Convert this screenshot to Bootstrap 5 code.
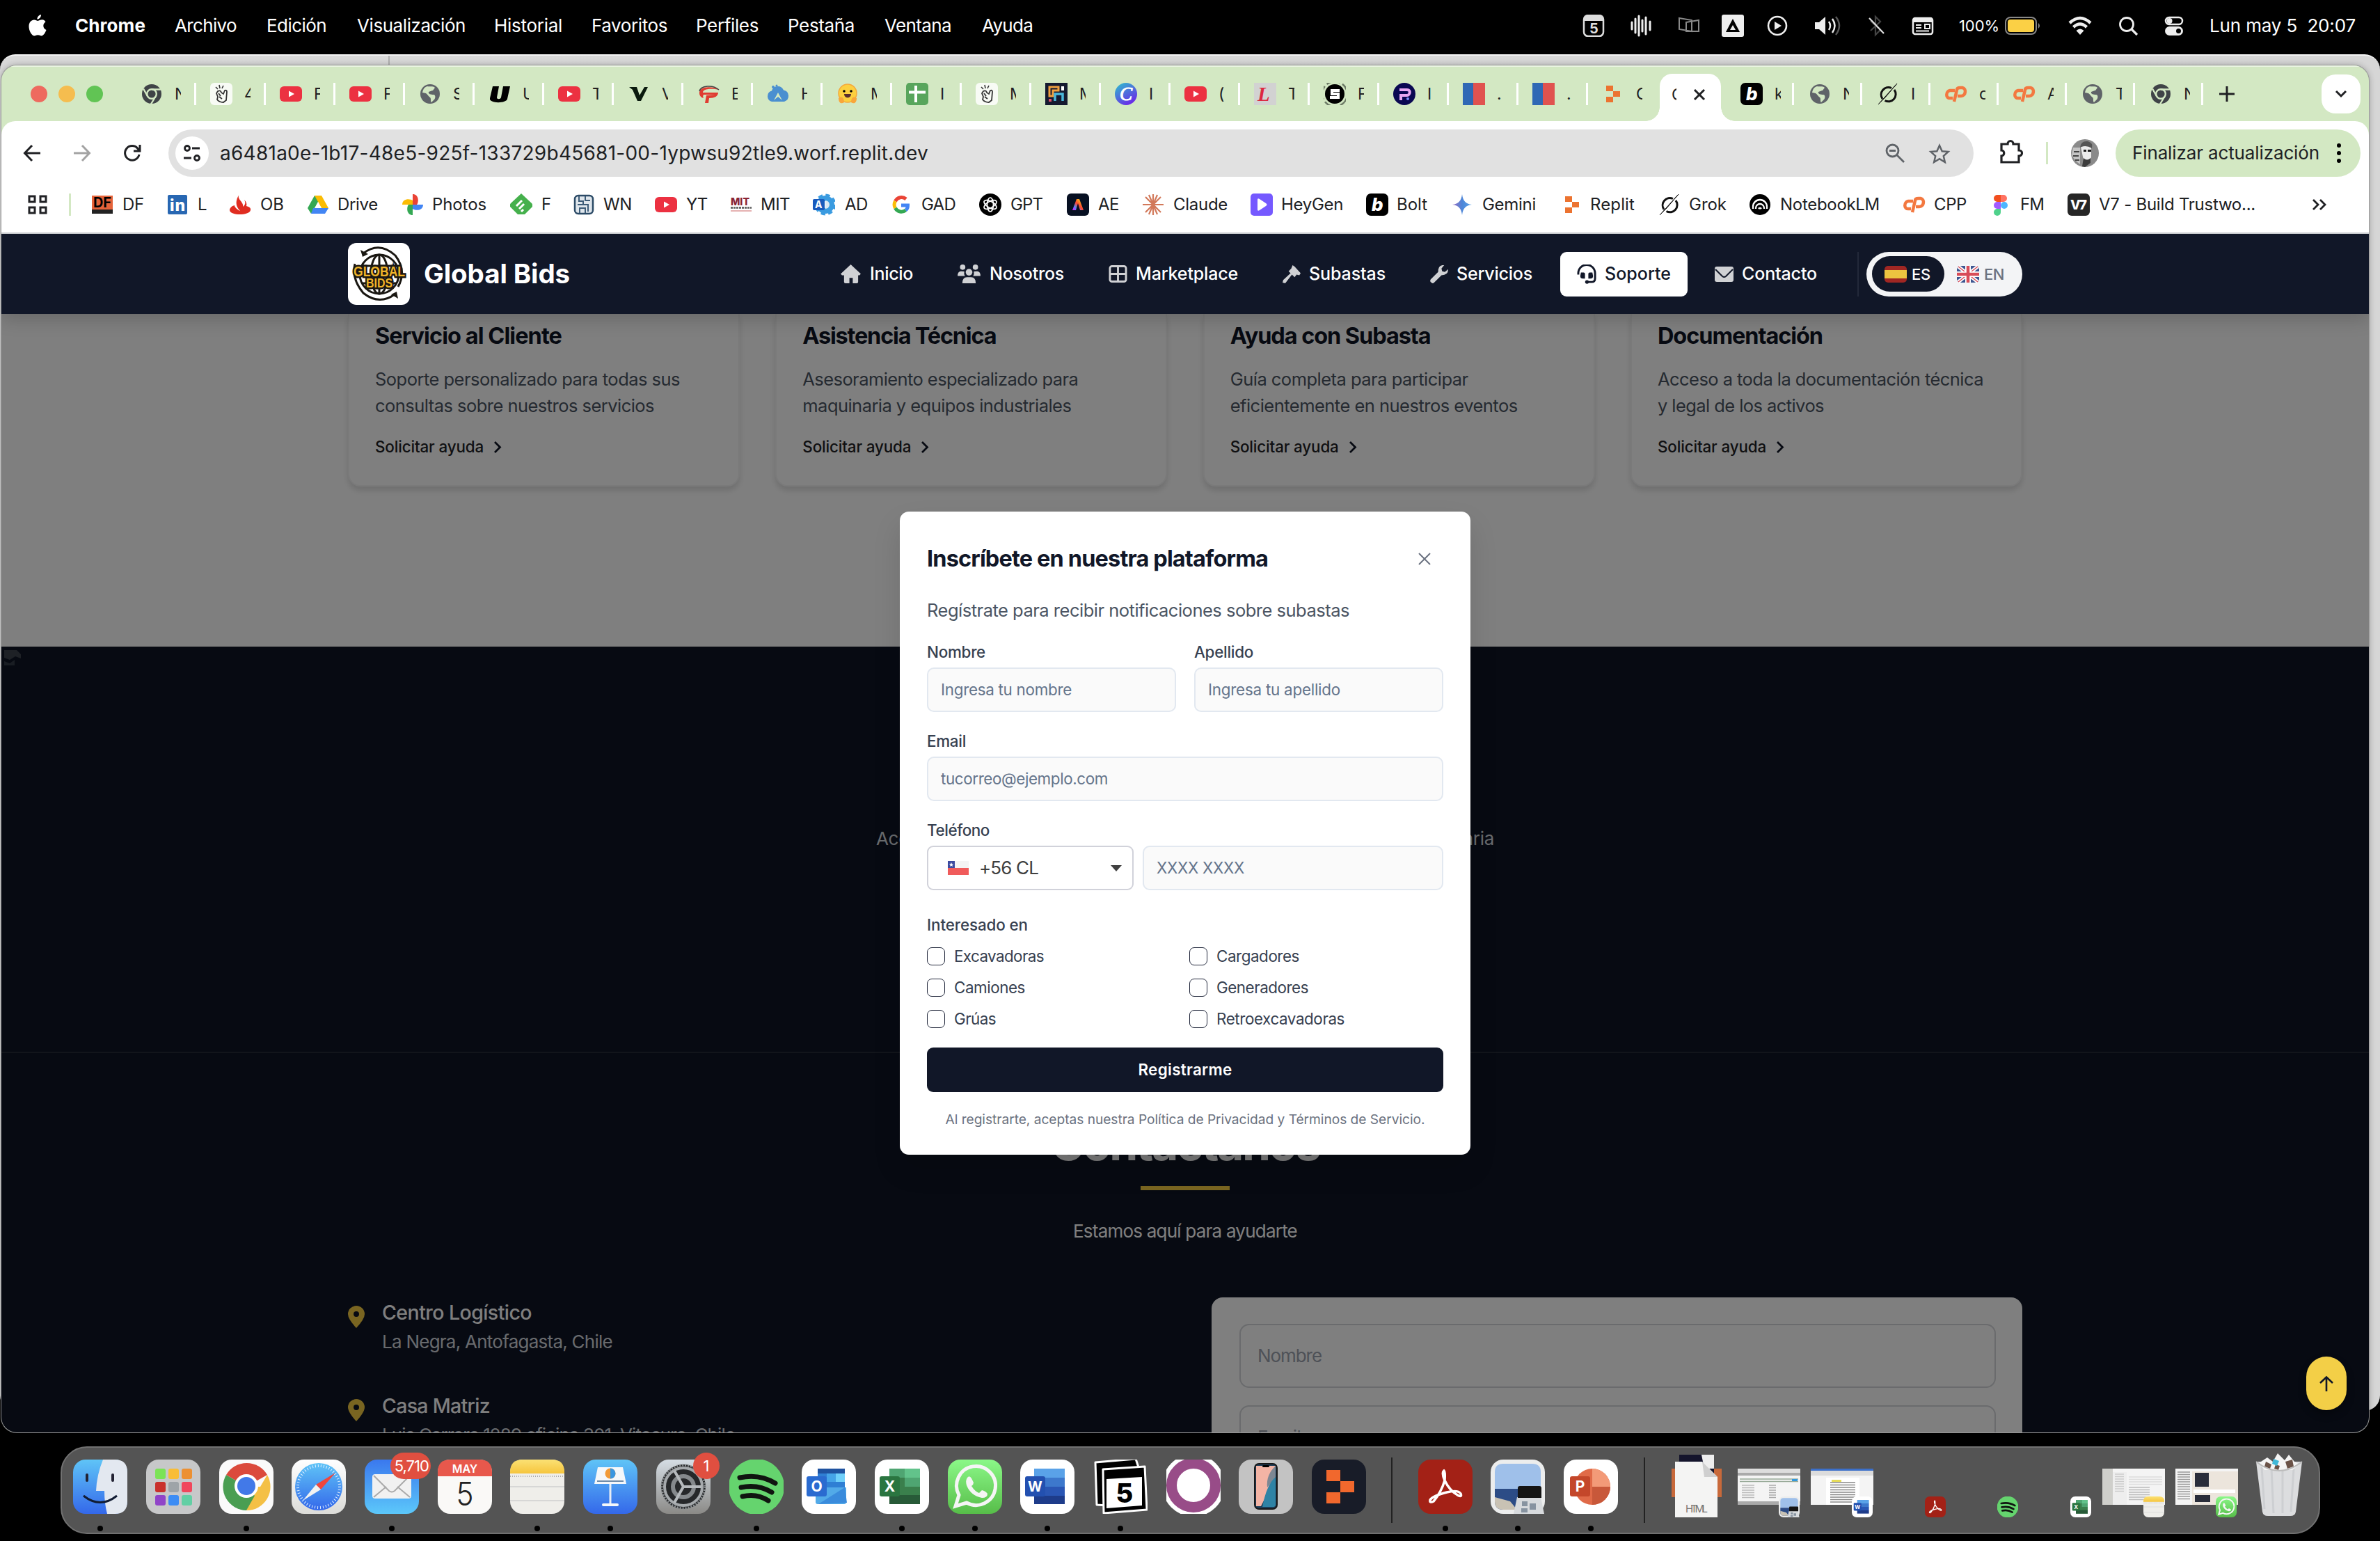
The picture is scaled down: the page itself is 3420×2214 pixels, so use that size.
<!DOCTYPE html>
<html lang="es">
<head>
<meta charset="utf-8">
<title>Global Bids</title>
<link href="https://cdn.jsdelivr.net/npm/bootstrap@5.3.0/dist/css/bootstrap.min.css" rel="stylesheet">
<style>
html,body{height:2214px;width:3420px;overflow:hidden;background:#000}
body{font-family:Inter,"Liberation Sans",sans-serif;font-size:24px;line-height:1;color:#202124;position:relative}
svg{display:block;flex:none;overflow:visible}
[data-w]{display:inline-block;white-space:pre;flex:none}
.slot{display:flex;align-items:center;flex:none}
/* macOS menu bar */
.menubar{height:78px;padding-bottom:4px;color:#fff;font-size:26px}
/* windows */
.backwin{position:absolute;left:0;top:78px;width:3420px;height:1949px;border-radius:22px;background:linear-gradient(90deg,#d9d9d9,#d6d6d6);border-top:2px solid #f4f4f4}
.backwin i{display:block;width:2px;height:16px;background:#b0b0b0;margin-left:558px}
.win{position:absolute;left:2px;top:94px;width:3402px;height:1964px;border-radius:22px;overflow:hidden;background:#d3e8c3;box-shadow:0 0 0 1px #999,0 0 10px rgba(0,0,0,.3)}
.tabs{height:80px;border-top:2px solid #eaf5e2}
.lights{gap:16px;padding-left:42px;width:200px}
.lights i{width:24px;height:24px;border-radius:50%}
.tabitem{display:flex;align-items:center;height:32px;border-right:3px solid #fff;flex:none}
.tabitem span{width:9px;overflow:hidden;font-size:23px;margin-left:17px;line-height:30px;white-space:nowrap}
.tab-on{width:88px;height:68px;margin-top:10px;padding-bottom:9px;background:#fff;border-radius:18px 18px 0 0;padding-left:17px;position:relative;flex:none}
.tab-on:before,.tab-on:after{content:"";position:absolute;bottom:0;width:20px;height:20px}
.tab-on:before{left:-20px;background:radial-gradient(circle at 0 0,transparent 19.5px,#fff 20px)}
.tab-on:after{right:-20px;background:radial-gradient(circle at 100% 0,transparent 19.5px,#fff 20px)}
.tab-on span{width:7px;overflow:hidden;font-size:23px;line-height:30px}
.tabmenu{width:56px;height:56px;border-radius:20px;background:#fff;margin-right:12px}
.toolbar{height:92px;background:#fff;border-radius:20px 20px 0 0}
.omnibox{width:2594px;height:68px;border-radius:34px;background:#e1e1e1;margin-left:40px;padding:0 34px 0 10px;font-size:28px}
.sitebtn{width:48px;height:48px;border-radius:50%;background:#fff;margin-right:16px}
.update{width:352px;height:68px;border-radius:34px;background:#d3e8c3;font-size:26px;padding-left:24px}
.bookmarks{height:68px;background:#fff;padding-bottom:12px}
.bookmarks span{font-size:24px}
.vsep{width:3px;height:32px;background:#d3e8c3}
/* site */
.site{height:1724px;position:relative;background:#fff;overflow:hidden;border-top:2px solid #c9cccf}
.sitebar{position:absolute;left:0;right:0;top:0;height:115px;background:#111728;z-index:5;padding:0 498px;color:#fff;box-shadow:0 8px 24px rgba(0,0,0,.18)}
.logo{width:89px;height:89px;border-radius:12px;background:#fff}
.brandname{font-size:38.5px;font-weight:700;margin-left:20px}
.navitem{height:64px;padding:0 24px;border-radius:9px;font-size:25px;font-weight:500;margin-left:16px;color:#fff;white-space:nowrap}
.navitem.on{background:#fff;color:#111728;margin-right:-1px}
.navitem svg{color:#d0d1d4}
.navitem.on svg{color:#111728}
.langs{width:224px;height:64px;border-radius:32px;background:#f3f4f6;padding:0 8px;color:#6b7280;font-size:22px;font-weight:500}
.langs .es{width:104px;height:51px;border-radius:26px;background:#111728;color:#fff;padding-left:18px}
.shell{width:2406px;margin:0 auto}
.helpgrid{margin-top:115px;display:grid;grid-template-columns:repeat(4,563px);justify-content:space-between;height:248px}
.helpcard{border:2px solid #f4f4f5;border-top:0;border-radius:0 0 18px 18px;padding:12px 0 0 37px;box-shadow:0 6px 9px rgba(0,0,0,.13);background:#fff}
.helpcard h3{font-size:32.5px;font-weight:700;line-height:40px;margin:0 0 23px;color:#0f1424}
.helpcard p{font-size:25.5px;line-height:38px;margin:0 0 24px;color:#4b5563}
.helpcard p [data-w]{display:block}
.helpcard a{display:flex;align-items:center;font-size:22.4px;font-weight:500;line-height:32px;color:#0f1424;text-decoration:none}
.cta{margin-top:230px;height:584px;background:#0f1525;border-bottom:2px solid #252a37;color:#d1d5db;font-size:26px;display:flex;flex-direction:column;align-items:center;padding-top:263px;position:relative}
.cta>svg{position:absolute;left:1px;top:3px}
.contact{background:#0f1525;height:600px;text-align:center;padding-top:95px}
.contact h2{font-size:66px;font-weight:700;line-height:70px;margin:0;color:#f0f0f0}
.goldbar{width:128px;height:6px;background:#f2ca42;margin:26px auto 39px}
.contact .sub{font-size:26px;line-height:40px;color:#fff;margin:0 0 75px}
.place{height:134px;padding-top:2px}
.place h4{font-size:28.5px;font-weight:500;line-height:40px;margin:0 0 2px;color:#fff}
.place p{font-size:26px;line-height:40px;margin:0;color:#d1d5db}
.place svg{margin:10px 25px 0 0}
.msgform{width:1165px;border-radius:16px;background:#fff;height:400px;padding:38px 38px 0 40px}
.msgfield{height:92px;border:2px solid #d4d6da;border-radius:14px;margin-bottom:25px;padding-left:24px;color:#9ca3af;font-size:26px;display:flex;align-items:center}
.dim{position:absolute;inset:0;background:rgba(0,0,0,.5);z-index:3}
.totop{position:absolute;z-index:6;left:3312px;top:1613px;width:58px;height:77px;border-radius:29px;background:#f3cf47;box-shadow:0 6px 12px rgba(0,0,0,.3)}
/* dialog */
.signup{position:absolute;z-index:6;left:1291px;top:399px;width:820px;height:924px;border-radius:13px;background:#fff;padding:0 39px;box-shadow:0 20px 40px rgba(0,0,0,.12);color:#374151;font-size:22.4px}
.signup h1{font-size:32.5px;font-weight:700;margin:0;color:#111728;line-height:40px}
.signup .intro{font-size:25.5px;color:#4b5563;line-height:36px;margin:36px 0 0}
.fl{line-height:32px;height:32px;font-weight:500;display:block}
.fbox{height:64px;border:2px solid #e2e8f0;border-radius:10px;background:#fafafa;color:#64748b;padding-left:18px;display:flex;align-items:center}
.fbox.pick{width:297px;background:#fff;border-color:#d1d2da;color:#404040;font-size:26px;padding-left:28px;border-radius:9px}
.tick{width:26px;height:26px;border:1.600px solid #20263a;border-radius:7px;margin-right:13px;flex:none}
.ticks{display:grid;grid-template-columns:377px 1fr;row-gap:19px;margin-top:16px}
.ticks div{display:flex;align-items:center;height:26px}
.go{height:64px;border-radius:9px;background:#111728;color:#fff;font-weight:600;margin-top:28px;font-size:22.4px}
.legal{font-size:19.2px;line-height:30px;height:30px;color:#6b7280;margin:24px 0 0;text-align:center}
/* dock */
.dock{position:absolute;left:87px;top:2078px;width:3247px;height:126px;border-radius:38px;background:#545454;border:2px solid #717171;padding-left:3px}
.app{width:104.7px;height:122px;padding-top:17px;display:flex;flex-direction:column;align-items:center;position:relative;flex:none}
.app.run:after{content:"";width:8px;height:8px;border-radius:50%;background:#000;position:absolute;top:112px}
.note{position:absolute;top:7px;left:57px;min-width:38px;height:38px;border-radius:19px;background:#e04f40;color:#fff;font-size:22px;text-align:center;line-height:38px;padding:0 6px;letter-spacing:-1px}
.note.wide{left:50px;width:58px}
.dsep{width:2px;height:94px;background:#222;flex:none}
.shot{width:90px;height:52px;margin-top:13px;background:#f4f4f4;position:relative}
.mini{position:absolute;left:66px;top:70px}
</style>
<script src="https://cdn.jsdelivr.net/npm/bootstrap@5.3.0/dist/js/bootstrap.bundle.min.js"></script>
</head>
<body>
<svg width="0" height="0" class="position-absolute">
<defs>
<linearGradient id="gb" x1="0" y1="0" x2="0" y2="1"><stop offset="0" stop-color="#5fc4f7"/><stop offset="1" stop-color="#3468ea"/></linearGradient>
<linearGradient id="gbr" x1="0" y1="0" x2="0" y2="1"><stop offset="0" stop-color="#3a78ee"/><stop offset="1" stop-color="#5cc8fa"/></linearGradient>
<linearGradient id="gg" x1="0" y1="0" x2="0" y2="1"><stop offset="0" stop-color="#8bf888"/><stop offset="1" stop-color="#57bd49"/></linearGradient>
<linearGradient id="gy" x1="0" y1="0" x2="0" y2="1"><stop offset="0" stop-color="#fbe174"/><stop offset="1" stop-color="#f6c53d"/></linearGradient>
<linearGradient id="gw" x1="0" y1="0" x2="0" y2="1"><stop offset="0" stop-color="#fff"/><stop offset="1" stop-color="#dcdcd8"/></linearGradient>
<linearGradient id="gset" x1="0" y1="0" x2="0" y2="1"><stop offset="0" stop-color="#d5dde4"/><stop offset="1" stop-color="#8b8a87"/></linearGradient>
<linearGradient id="gcanva" x1="0" y1="0" x2=".6" y2="1"><stop offset="0" stop-color="#2bc4cc"/><stop offset="1" stop-color="#6a2be8"/></linearGradient>
<linearGradient id="ggem" x1="0" y1="0" x2="1" y2="0"><stop offset="0" stop-color="#9a6cc0"/><stop offset=".5" stop-color="#4d86d8"/><stop offset="1" stop-color="#5aa3e8"/></linearGradient>
<linearGradient id="gae" x1="0" y1="1" x2="1" y2="0"><stop offset="0" stop-color="#f0f"/><stop offset=".25" stop-color="#58f"/><stop offset=".5" stop-color="#f43"/><stop offset=".75" stop-color="#f9a31f"/><stop offset="1" stop-color="#7d3"/></linearGradient>
<symbol id="apple" viewBox="0 0 28 34"><path fill="#fff" d="M19 1c.3 3-2.200 6.500-5.500 6.700C13 4.800 16 1.500 19 1zM25.500 11.500c-4.700 2.800-4 9.500 1 11.500-1 3-3.800 8.500-7 8.500-2 0-2.700-1.200-5-1.200s-3.200 1.200-5 1.200C5.500 31.500 1.500 24 1.500 18c0-6 3.700-9.500 7.500-9.500 2.400 0 4 1.400 5.500 1.400 1.400 0 3.500-1.600 6.300-1.600 1.700 0 3.500 1.200 4.700 3.200z"/></symbol>
<symbol id="chrm" viewBox="0 0 32 32"><circle cx="16" cy="16" r="14" fill="#3f4347"/><circle cx="16" cy="16" r="6.800" fill="none" stroke="#d3e8c3" stroke-width="2.400"/><path d="M16 9.500h13M10.200 19.300 4 8.500M21.600 19.500 15 30.500" stroke="#d3e8c3" stroke-width="2.400"/></symbol>
<symbol id="snap" viewBox="0 0 32 32"><rect width="32" height="32" rx="6" fill="#f8fbf5"/><path d="M8 6l3 3M13 3l1 5M19 4l-2 4" fill="none" stroke="#333" stroke-width="1.600"/><path d="M11 12q4-2 5 2l3 2 2-5q3-1 3 2l-1 12-4 3q-6 0-9-4l1-4-2-5zM12 15l3 4M13 20l4 3" fill="none" stroke="#333" stroke-width="1.800"/></symbol>
<symbol id="yt" viewBox="0 0 32 32"><rect y="5" width="32" height="22" rx="6" fill="#ec3141"/><path d="M13 11.500v9l8-4.500z" fill="#fff"/></symbol>
<symbol id="globe" viewBox="0 0 32 32"><circle cx="16" cy="16" r="14" fill="#5f6368"/><path d="M12 5c3 1 8-1 11 2l-3 4c-2 0-3 1-6 2-1 3 3 4 7 4 3 0 3 5 1 7l-4 4c-2-1 0-5-2-7-3-2-3-4-6-6l-5-1C6 9 8 6 12 5z" fill="#d3e8c3"/></symbol>
<symbol id="uu" viewBox="0 0 32 32"><path d="M6 5h9l-3 16c0 3 5 3 6 0l3-16h10l-4 18c-1 7-27 7-25-1z" fill="#000"/></symbol>
<symbol id="vv" viewBox="0 0 32 32"><path d="M2 6h11l4 12 7-12h5L19 26h-5L7 10z" fill="#0a1a0e"/></symbol>
<symbol id="tt" viewBox="0 0 32 32"><path d="M3 15C2 5 22 4 31 10 22 8 8 8 8 14h22c0 5-5 8-13 8l-1 7h-5l2-11 13-1H9c-1 2-1 3 0 5-4-1-6-4-6-7z" fill="#e03c31"/><path d="M3 12C5 4 22 2 31 10" fill="none" stroke="#444" stroke-width="1.500"/></symbol>
<symbol id="cloudb" viewBox="0 0 32 32"><path d="M7 27a8 8 0 0 1 0-15.500 9 9 0 0 1 17-1A8.500 8.500 0 0 1 25 27z" fill="#4a8fd0"/><path d="M10 25l6-11 6 11-6-5z" fill="#d3e8c3"/><circle cx="9" cy="6" r="2" fill="#4a8fd0"/><circle cx="14" cy="4" r="1.500" fill="#4a8fd0"/></symbol>
<symbol id="hug" viewBox="0 0 32 32"><circle cx="16" cy="15" r="13" fill="#fcd03f" stroke="#f5a83a" stroke-width="1.500"/><circle cx="11" cy="12" r="1.800"/><circle cx="21" cy="12" r="1.800"/><path d="M11 16h10c0 7-10 7-10 0z" fill="#5a2d2d"/><path d="M3 22c5-4 8 0 8 6-4 3-8 1-8-6zM29 22c-5-4-8 0-8 6 4 3 8 1 8-6z" fill="#f9a63a"/></symbol>
<symbol id="sheet" viewBox="0 0 32 32"><rect width="32" height="32" rx="5" fill="#58a55c"/><path d="M14 4v24M4 13.500h24" stroke="#fff" stroke-width="4"/></symbol>
<symbol id="maze" viewBox="0 0 32 32"><rect width="32" height="32" fill="#151a30"/><path d="M6 19V6h13v5H11v8z" fill="none" stroke="#f0a040" stroke-width="3"/><path d="M14 26V16h11v10" fill="none" stroke="#4ab8dc" stroke-width="3.500"/><path d="M23 5h4v6h-4z" fill="#fff"/><path d="M5 23h4v4H5z" fill="#e04e6a"/></symbol>
<symbol id="canva" viewBox="0 0 32 32"><circle cx="16" cy="16" r="16" fill="url(#gcanva)"/><text x="7" y="25" font-size="27" font-style="italic" font-family="Liberation Serif" fill="#fff" stroke="#fff">C</text></symbol>
<symbol id="ell" viewBox="0 0 32 32"><rect width="32" height="32" fill="#d2d2d2"/><text x="5" y="26" font-size="29" font-weight="700" font-style="italic" font-family="Liberation Serif" fill="#dc2840">L</text></symbol>
<symbol id="ess" viewBox="0 0 32 32"><circle cx="16" cy="16" r="14" fill="#000"/><circle cx="16" cy="16" r="18" fill="none" stroke="#6d7b67" stroke-width="2.500" stroke-dasharray="20 4"/><path d="M23 11H12v5h9v5H9" fill="none" stroke="#fff" stroke-width="4"/></symbol>
<symbol id="pee" viewBox="0 0 32 32"><circle cx="16" cy="16" r="16" fill="#0a0852"/><path d="M9 10h11c6 0 4 8 0 8h-9v7" fill="none" stroke="#e6a6f0" stroke-width="4"/><circle cx="21" cy="23" r="2" fill="#7a8cf5"/></symbol>
<symbol id="flagbr" viewBox="0 0 32 32"><path d="M0 0h15v32H0z" fill="#2f68b5"/><path d="M15 0h17v32H15z" fill="#e0524f"/></symbol>
<symbol id="replit" viewBox="0 0 32 32"><path d="M6 4h10v8H6zM16 12h10v8H16zM6 20h10v8H6z" fill="#ec7330"/></symbol>
<symbol id="bolt" viewBox="0 0 32 32"><rect width="32" height="32" rx="7"/><text x="8" y="25" font-size="26" font-weight="800" font-style="italic" font-family="Inter" fill="#fff">b</text></symbol>
<symbol id="grok" viewBox="0 0 32 32"><path d="M21 7.500A10.500 10.500 0 0 0 8 23M25 10a10.500 10.500 0 0 1-13.500 15.500" fill="none" stroke="#111" stroke-width="3"/><path d="M2 31 29 1 12 21z" fill="#111" stroke="#111"/></symbol>
<symbol id="cp" viewBox="0 0 32 32"><path d="M14 11H7c-6 1-7 12 1 11h3M13 27l4-17c0-2 2-3 5-3h3c6 1 5 12-2 12h-5" fill="none" stroke="#f37840" stroke-width="4.500"/></symbol>
<symbol id="df" viewBox="0 0 32 32"><path fill="#e5633a" d="M1 3h30v20H1z"/><path d="M1 23h30v6H1z" fill="#222"/><text x="3" y="20" font-size="20" font-weight="700" font-family="Inter" textLength="26" lengthAdjust="spacingAndGlyphs">DF</text></symbol>
<symbol id="inn" viewBox="0 0 32 32"><rect x="2" y="2" width="28" height="28" rx="2" fill="#2867b2"/><text x="5" y="25" font-size="23" font-weight="800" font-family="Inter" fill="#fff" textLength="22">in</text></symbol>
<symbol id="sant" viewBox="0 0 32 32"><path d="M15 1c-5 7 7 11 5 18 4-3 4-6 2-10 3 3 4 6 3 9 4 1 7 3 6 6-2 8-29 8-30 0 0-3 3-6 7-7 0 3 5 7 8 8C9 18 9 10 15 1z" fill="#e02c20"/></symbol>
<symbol id="drive" viewBox="0 0 32 32"><path d="M11 3h10l-9 17-6 9L1 21z" fill="#34a853"/><path d="M11 3h10l10 18H21z" fill="#fbbc04"/><path d="M9 21h22l-5 8H6z" fill="#4285f4"/><path d="m16 12-5 9h10z" fill="#fff"/></symbol>
<symbol id="photos" viewBox="0 0 32 32"><path d="M16 16V1c9 0 9 11 6 15z" fill="#ea4335"/><path d="M16 16h15c0 9-11 9-15 6z" fill="#4285f4"/><path d="M16 16v15c-9 0-9-11-6-15z" fill="#34a853"/><path d="M16 16H1c0-9 11-9 15-6z" fill="#fbbc04"/></symbol>
<symbol id="feed" viewBox="0 0 32 32"><path d="M16 0 31 14c2 2 2 4 0 6L21 30H11L1 20c-2-2-2-4 0-6z" fill="#45b04c"/><path d="m9 18 8-8M13 22l7-7M16 26l3-3" stroke="#fff" stroke-width="3"/></symbol>
<symbol id="wn" viewBox="0 0 32 32"><rect x="3" y="3" width="26" height="26" rx="5" fill="#dfe6ec" stroke="#2b4a66" stroke-width="2.500"/><path d="M9 4v7h6v5H7m11-12v6h7M10 28v-7h8v7m-3-12h7v10" fill="none" stroke="#3d5c78" stroke-width="2"/></symbol>
<symbol id="mit" viewBox="0 0 32 32"><text x="1" y="17" font-size="15" font-weight="800" font-family="Inter" fill="#8a2433" textLength="27" lengthAdjust="spacingAndGlyphs">MIT</text><path d="M1 20.500h30" stroke="#555" stroke-width="2.500" stroke-dasharray="3 1"/><path d="M1 25h30" stroke="#d99" stroke-width="1.500"/></symbol>
<symbol id="adp" viewBox="0 0 32 32"><circle cx="18" cy="16" r="9" fill="none" stroke="#3a9be0" stroke-width="8"/><circle cx="18" cy="16" r="13" fill="none" stroke="#3a9be0" stroke-width="5" stroke-dasharray="6 4.200"/><path d="M18 10a6 6 0 0 1 0 12z" fill="#dbe7f3"/><rect y="8" width="17" height="16" rx="2" fill="#185abd"/><text x="3" y="21" font-size="14" font-weight="700" font-family="Inter" fill="#fff">A</text></symbol>
<symbol id="goog" viewBox="0 0 32 32"><g fill="none" stroke-width="5"><path d="M23 8A10 10 0 0 0 7.500 11" stroke="#ea4335"/><path d="M7.500 11a10 10 0 0 0 0 10" stroke="#fbbc05"/><path d="M7.500 21A10 10 0 0 0 22.500 24" stroke="#34a853"/><path d="M22.500 24c3-2 3-5 3-7H16" stroke="#4285f4"/></g></symbol>
<symbol id="gpt" viewBox="0 0 32 32"><circle cx="16" cy="16" r="16"/><g fill="none" stroke="#fff" stroke-width="1.700"><ellipse cx="16" cy="16" rx="4.500" ry="10"/><ellipse cx="16" cy="16" rx="4.500" ry="10" transform="rotate(60 16 16)"/><ellipse cx="16" cy="16" rx="4.500" ry="10" transform="rotate(120 16 16)"/></g></symbol>
<symbol id="ae" viewBox="0 0 32 32"><rect width="32" height="32" rx="6" fill="#071022"/><path d="M8 24 14 8h4l6 16h-5l-3-10-3 10z" fill="url(#gae)"/></symbol>
<symbol id="claude" viewBox="0 0 32 32"><path d="M16 1v30M1 16h30M5 5l22 22M27 5 5 27M10 2l12 28M22 2 10 30" stroke="#d2795a" stroke-width="2.200"/></symbol>
<symbol id="heygen" viewBox="0 0 32 32"><rect width="32" height="32" rx="5" fill="#7559ff"/><path d="M10 9q0-3 3-1l9 6q3 2 0 4l-9 6q-3 2-3-1z" fill="#fff"/></symbol>
<symbol id="gemini" viewBox="0 0 32 32"><path d="M16 1c1 9 5 14 14 15-9 1-13 6-14 15C15 22 11 17 2 16c9-1 13-6 14-15z" fill="url(#ggem)"/></symbol>
<symbol id="nblm" viewBox="0 0 32 32"><circle cx="16" cy="16" r="15"/><g fill="none" stroke="#fff" stroke-width="2.300"><path d="M6 22v-3a10 10 0 0 1 20 0v3M10 22v-1a6 6 0 0 1 12 0v1M14 22a2.500 2.500 0 0 1 4 0"/></g></symbol>
<symbol id="figma" viewBox="0 0 32 32"><path d="M16 2h-5a5 5 0 0 0 0 10h5z" fill="#f24e1e"/><path d="M16 2h4a5 5 0 0 1 0 10h-4z" fill="#ff7262"/><path d="M16 12h-5a5 5 0 0 0 0 10h5z" fill="#a259ff"/><circle cx="21" cy="17" r="5" fill="#4db6ff"/><path d="M16 22h-5a5 5 0 1 0 5 5z" fill="#4fd18b"/></symbol>
<symbol id="v7" viewBox="0 0 32 32"><rect width="32" height="32" rx="6" fill="#262626"/><text x="4" y="23" font-size="19" font-weight="800" font-family="Inter" fill="#fff" textLength="24">V7</text></symbol>
<symbol id="grid4" viewBox="0 0 32 32"><g fill="none" stroke="#202124" stroke-width="3"><path d="M4 4h8v8H4zM20 4h8v8h-8zM4 20h8v8H4zM20 20h8v8h-8z"/></g></symbol>
<!-- status icons -->
<symbol id="s-cal" viewBox="0 0 32 32"><rect x="2" y="1" width="28" height="30" rx="6" fill="#000" stroke="#ddd" stroke-width="2.500"/><path d="M2 9V6q0-5 5-5h18q5 0 5 5v3z" fill="#ddd"/><text x="10" y="27" font-size="20" font-weight="700" font-family="Inter" fill="#ddd">5</text></symbol>
<symbol id="s-wave" viewBox="0 0 32 32"><path d="M3 11v10M8 6v20M13 2v28M18 8v16M23 4v24M29 10v12" stroke="#eee" stroke-width="3" stroke-linecap="round"/></symbol>
<symbol id="s-disp" viewBox="0 0 32 32"><path d="M2 5 20 8v16L2 21zM12 11 30 8v16H12z" fill="none" stroke="#8a8a8a" stroke-width="2"/></symbol>
<symbol id="s-tri" viewBox="0 0 32 32"><rect width="32" height="32" rx="3" fill="#eee"/><path d="M16 6 26 25H6z"/><path d="m16 15 4 7h-8z" fill="#eee"/></symbol>
<symbol id="s-play" viewBox="0 0 32 32"><circle cx="16" cy="16" r="13" fill="none" stroke="#eee" stroke-width="2.600"/><path d="M12 10v12l10-6z" fill="#eee"/></symbol>
<symbol id="s-vol" viewBox="0 0 40 32"><path d="M2 11h6l9-8v26l-9-8H2z" fill="#eee"/><path d="M22 10q4 6 0 12M27 6q7 10 0 20" fill="none" stroke="#eee" stroke-width="2.500"/><path d="M32 3q10 13 0 26" fill="none" stroke="#555" stroke-width="2.500"/></symbol>
<symbol id="s-bt" viewBox="0 0 32 32"><path d="M8 9 22 22l-7 7V3l7 7L8 23" fill="none" stroke="#444" stroke-width="2.300"/><path d="M6 5 27 27" stroke="#ddd" stroke-width="2.300"/></symbol>
<symbol id="s-kb" viewBox="0 0 32 32"><rect x="2" y="5" width="28" height="23" rx="3" fill="none" stroke="#eee" stroke-width="2.500"/><path d="M2 8h28" stroke="#eee" stroke-width="6"/><path d="M6 15h8M6 19h8M6 23.500h19" stroke="#eee" stroke-width="2"/><rect x="19" y="14" width="7" height="6" fill="none" stroke="#eee" stroke-width="2"/></symbol>
<symbol id="s-bat" viewBox="0 0 52 32"><rect x="1" y="4" width="44" height="24" rx="7" fill="none" stroke="#888" stroke-width="2"/><rect x="4" y="7" width="38" height="18" rx="4" fill="#fbd045"/><path d="M48 12v8q4-4 0-8z" fill="#888"/></symbol>
<symbol id="s-wifi" viewBox="0 0 36 32"><path d="M3 12q15-14 30 0M8.500 18q9.500-9 19 0" fill="none" stroke="#eee" stroke-width="4.500"/><path d="m12.500 23 5.500 6 5.500-6q-5.500-5-11 0z" fill="#eee"/></symbol>
<symbol id="s-find" viewBox="0 0 32 32"><circle cx="14" cy="14" r="9.500" fill="none" stroke="#eee" stroke-width="2.800"/><path d="m21 21 8 8" stroke="#eee" stroke-width="3.200"/></symbol>
<symbol id="s-cc" viewBox="0 0 32 32"><rect x="4" y="4" width="24" height="10" rx="5" fill="none" stroke="#eee" stroke-width="2.500"/><circle cx="9.500" cy="9" r="4" fill="#eee"/><rect x="3" y="17" width="26" height="13" rx="6.500" fill="#eee"/><circle cx="22.500" cy="23.500" r="3.500"/></symbol>
<!-- site icons -->
<symbol id="n-home" viewBox="0 0 30 28"><path fill="currentColor" d="M15 0 30 14l-2 2h-2v10q0 2-2 2h-6v-8h-5v8H7q-2 0-2-2V16H2l-2-2z"/></symbol>
<symbol id="n-team" viewBox="0 0 34 28"><g fill="currentColor"><circle cx="7.500" cy="4" r="4"/><circle cx="26.500" cy="4" r="4"/><path d="M0 17q0-7 5-7 5 0 5 1-1 4 1 6zM34 17q0-7-5-7-5 0-5 1 1 4-1 6z"/><circle cx="17" cy="11.500" r="5"/><path d="M7 28q0-9 7-9h6q7 0 7 9z"/></g></symbol>
<symbol id="n-grid" viewBox="0 0 27 26"><rect x="1.500" y="1.500" width="24" height="23" rx="3" fill="none" stroke="currentColor" stroke-width="3"/><path d="M13.500 2v22M2 13h23" stroke="currentColor" stroke-width="3"/></symbol>
<symbol id="n-gavel" viewBox="0 0 27 27"><path fill="currentColor" d="m15 0 3 2 9 10-2 3-4-1-3 4-4-4L4 27l-4-1 1-4L12 12 9 9l4-4z"/></symbol>
<symbol id="n-wrench" viewBox="0 0 27 27"><path fill="currentColor" d="M21 0q-9-1-9 10L1 21q-2 3 1 5 2 2 4 0L17 15q10 0 10-9l-5 4-4-1-1-4z"/></symbol>
<symbol id="n-head" viewBox="0 0 29 29"><path d="M2 15v-2a12 12 0 0 1 25 0v8q0 5-5 5h-8" fill="none" stroke="currentColor" stroke-width="3"/><path fill="currentColor" d="M6 12h4q2 0 2 2v7H9q-4 0-4-4zM23 12h-4q-2 0-2 2v7h3q4 0 4-4z"/><circle cx="15" cy="26" r="2.800" fill="currentColor"/></symbol>
<symbol id="n-mail" viewBox="0 0 27 22"><rect width="27" height="22" rx="3" fill="currentColor"/><path d="m1 4 10 10q2.500 2 5 0L26 4" fill="none" stroke="#111728" stroke-width="2"/></symbol>
<symbol id="pin" viewBox="0 0 24 32"><path d="M12 0a12 12 0 0 1 12 12q0 7-12 20Q0 19 0 12A12 12 0 0 1 12 0zm0 8a4 4 0 1 0 0 8 4 4 0 0 0 0-8z" fill="#f2ca42" fill-rule="evenodd"/></symbol>
<!-- dock icons -->
<symbol id="d-finder" viewBox="0 0 78 78"><rect width="78" height="78" rx="18" fill="url(#gb)"/><path d="M43 0q-9 22-10 45h12q0 18 4 33h11q18 0 18-18V18Q78 0 60 0z" fill="#e3e8f0"/><path d="M20 22v8M57 22v8" stroke="#223" stroke-width="4" stroke-linecap="round"/><path d="M15 52q24 19 48 0" fill="none" stroke="#111c33" stroke-width="3"/></symbol>
<symbol id="d-launch" viewBox="0 0 78 78"><rect width="78" height="78" rx="18" fill="#c7c8c9"/><g><rect x="13" y="13" width="15" height="15" rx="3" fill="#7be356"/><rect x="32" y="13" width="15" height="15" rx="3" fill="#f8bd36"/><rect x="51" y="13" width="15" height="15" rx="3" fill="#ec9032"/><rect x="13" y="32" width="15" height="15" rx="3" fill="#c9312c"/><rect x="32" y="32" width="15" height="15" rx="3" fill="#9ea4a8"/><rect x="51" y="32" width="15" height="15" rx="3" fill="#f1475c"/><rect x="13" y="51" width="15" height="15" rx="3" fill="#9044c8"/><rect x="32" y="51" width="15" height="15" rx="3" fill="#3c8cf4"/><rect x="51" y="51" width="15" height="15" rx="3" fill="#62cfa4"/></g></symbol>
<symbol id="d-chrome" viewBox="0 0 78 78"><rect width="78" height="78" rx="18" fill="#fafafa"/><path d="M39 39 10 22a34 34 0 0 1 59 0z" fill="#db4a3c"/><path d="M39 39h20l10-17a34 34 0 0 1-30 51z" fill="#f4c045"/><path d="M39 39 10 22a34 34 0 0 0 29 51l12-21z" fill="#4a9e52"/><circle cx="39" cy="38" r="17" fill="#fff"/><circle cx="39" cy="38" r="13" fill="#4279e8"/></symbol>
<symbol id="d-safari" viewBox="0 0 78 78"><rect width="78" height="78" rx="18" fill="url(#gw)"/><circle cx="39" cy="39" r="34" fill="url(#gb)"/><circle cx="39" cy="39" r="30" fill="none" stroke="#dfefff" stroke-width="4" stroke-dasharray="1 3"/><path d="m63 19-28 17 7 7z" fill="#f0463c"/><path d="m16 59 19-23 7 7z" fill="#f2f2f2"/></symbol>
<symbol id="d-mail" viewBox="0 0 78 78"><rect width="78" height="78" rx="18" fill="url(#gbr)"/><rect x="11" y="21" width="56" height="35" rx="4" fill="#f1f1f1"/><path d="m13 23 22 22q4 3 8 0l22-22M13 54l18-15M65 54 47 39" fill="none" stroke="#aaa" stroke-width="2"/></symbol>
<symbol id="d-cal" viewBox="0 0 78 78"><rect width="78" height="78" rx="18" fill="#faf9f7"/><path d="M0 24v-6Q0 0 18 0h42q18 0 18 18v6z" fill="#e8584c"/><text x="39" y="19" font-size="16" font-weight="600" font-family="Inter" fill="#fff" text-anchor="middle">MAY</text><text x="39" y="66" font-size="46" font-weight="300" font-family="Inter" fill="#222" text-anchor="middle" textLength="25" lengthAdjust="spacingAndGlyphs">5</text></symbol>
<symbol id="d-notes" viewBox="0 0 78 78"><rect width="78" height="78" rx="18" fill="#efeeea"/><path d="M0 20v-2Q0 0 18 0h42q18 0 18 18v2z" fill="url(#gy)"/><path d="M0 24h78" stroke="#aaa" stroke-width="2" stroke-dasharray="1 2"/><path d="M0 39h78M0 59h78" stroke="#cfcfcf" stroke-width="1.500"/></symbol>
<symbol id="d-key" viewBox="0 0 78 78"><rect width="78" height="78" rx="18" fill="url(#gb)"/><path d="M21 11h36l5 24H16z" fill="#f5f7fa"/><circle cx="39" cy="20" r="7.500" fill="#f29a38"/><path d="M39 20v-7.500a7.500 7.500 0 0 1 0 15z" fill="#3a96e0"/><path d="M20 31h38" stroke="#6f8ba8" stroke-width="2"/><path d="M39 35v30" stroke="#e8edf4" stroke-width="3"/><rect x="27" y="63" width="24" height="4" rx="2" fill="#f5f7fa"/></symbol>
<symbol id="d-set" viewBox="0 0 78 78"><rect width="78" height="78" rx="18" fill="url(#gset)"/><circle cx="39" cy="39" r="32" fill="#26282a"/><circle cx="39" cy="39" r="27" fill="none" stroke="#a5a9ac" stroke-width="4"/><circle cx="39" cy="39" r="31" fill="none" stroke="#8d9194" stroke-width="3" stroke-dasharray="2 2"/><circle cx="39" cy="39" r="15" fill="none" stroke="#85898c" stroke-width="6"/><path d="M39 39h26M39 39 26 16M39 39 26 62" stroke="#b5b9bc" stroke-width="4"/></symbol>
<symbol id="d-spot" viewBox="0 0 78 78"><circle cx="39" cy="39" r="40" fill="#65d46e"/><path d="M15 26q28-6 51 8M17 40q24-5 44 7M19 53q20-5 37 6" fill="none" stroke="#101510" stroke-width="7" stroke-linecap="round"/></symbol>
<symbol id="d-out" viewBox="0 0 78 78"><rect width="78" height="78" rx="18" fill="#fff"/><path d="M23 13h39v30H23z" fill="#2f7fd4"/><path d="M23 13h39v7H23z" fill="#1f52a0"/><path d="M36 20h13v12H36z" fill="#45a4e8"/><path d="M49 20h13v12H49z" fill="#70d0fa"/><path d="M20 40h44v21q0 3-3 3H23q-3 0-3-3z" fill="#52aae8"/><path d="m24 64 38-24 3 22z" fill="#3a8bdc"/><rect x="7" y="24" width="29" height="29" rx="3" fill="#2a6bd0"/><text x="21.500" y="46" font-size="21" font-weight="700" font-family="Inter" fill="#fff" text-anchor="middle">O</text></symbol>
<symbol id="d-xls" viewBox="0 0 78 78"><rect width="78" height="78" rx="18" fill="#fff"/><path d="M21 13h44v51H21z" fill="#3a7f4c"/><path d="M21 13h22v13H21z" fill="#4fa572"/><path d="M43 13h22v13H43z" fill="#62c38b"/><path d="M43 26h22v13H43z" fill="#4fa572"/><path d="M21 51h44v13H21z" fill="#285a38"/><rect x="7" y="24" width="29" height="29" rx="3" fill="#2a7540"/><text x="21.500" y="46" font-size="21" font-weight="700" font-family="Inter" fill="#fff" text-anchor="middle">X</text></symbol>
<symbol id="d-wa" viewBox="0 0 78 78"><rect width="78" height="78" rx="18" fill="url(#gg)"/><path d="m11 67 5-16a28 28 0 1 1 11 11z" fill="none" stroke="#f5f5f5" stroke-width="5"/><path d="M28 26q3-4 6 1l3 6q0 3-3 5 5 8 11 10l4-4q5 1 8 5 0 6-8 6Q33 52 27 37q-2-7 1-11z" fill="#f5f5f5"/></symbol>
<symbol id="d-word" viewBox="0 0 78 78"><rect width="78" height="78" rx="18" fill="#fff"/><path d="M20 13h44v13H20z" fill="#5aa2e8"/><path d="M20 26h44v13H20z" fill="#3d78cc"/><path d="M20 39h44v13H20z" fill="#2a56b4"/><path d="M20 52h44v12H20z" fill="#1e3c8a"/><rect x="7" y="24" width="29" height="29" rx="3" fill="#2350b0"/><text x="21.500" y="46" font-size="20" font-weight="700" font-family="Inter" fill="#fff" text-anchor="middle">W</text></symbol>
<symbol id="d-notion" viewBox="0 0 78 78"><path d="m3 4 58-5 4 12v58l-60-4z" fill="#000" stroke="#fff" stroke-width="3" stroke-linejoin="round"/><path d="m14 14 60-4 3 62-62 5z" fill="#000" stroke="#fff" stroke-width="3" stroke-linejoin="round"/><path d="m19 28 51-3v41l-51 4z" fill="#fff"/><text x="45" y="62" font-size="38" font-weight="800" font-family="Inter" text-anchor="middle">5</text></symbol>
<symbol id="d-ring" viewBox="0 0 78 78"><circle cx="39" cy="37" r="45" fill="#fff"/><circle cx="39" cy="37" r="31.500" fill="none" stroke="#984c88" stroke-width="15"/></symbol>
<symbol id="d-phone" viewBox="0 0 78 78"><rect width="78" height="78" rx="18" fill="#c3c3c3"/><rect x="23" y="6" width="32" height="65" rx="6" fill="#1c3d58" stroke="#191919" stroke-width="2"/><path d="M25 9h28v16Q42 36 38 55l-6 12h-7z" fill="#f3b4a5"/><path d="M53 9v16L41 40q-2-18 12-31z" fill="#7d8793"/><path d="M53 25Q40 36 34 68h17l2-2z" fill="#2f83a5"/><rect x="34" y="8" width="10" height="3" rx="1.500"/></symbol>
<symbol id="d-replit" viewBox="0 0 78 78"><rect width="78" height="78" rx="18" fill="#181c28"/><path d="M21 15h20v16H21zM41 31h20v16H41zM21 47h20v16H21z" fill="#f1682d"/></symbol>
<symbol id="d-pdf" viewBox="0 0 78 78"><rect width="78" height="78" rx="18" fill="#a32116"/><path d="M37 16q-4 3 1 14 7 15 20 22 5 2 3-3-4-6-20-2-20 5-24 11-1 5 5 2 11-13 16-30 1-12-1-14z" fill="none" stroke="#fff" stroke-width="3.500"/></symbol>
<symbol id="d-prev" viewBox="0 0 78 78"><rect width="78" height="78" rx="18" fill="#eceded"/><path d="M6 18Q6 6 18 6h42q12 0 12 12v24H6z" fill="#9fc0ea"/><path d="M6 42h66v18q0 12-12 12H18Q6 72 6 60z" fill="#2c4c86"/><path d="m6 54 22 6 10 12H18Q6 72 6 60z" fill="#c9c2b4"/><path d="m38 54-5 24q0 4 5 4h34q5 0 5-4l-5-24z" fill="#d7dadd"/><path d="M39 41q0-3 3-3h28q3 0 3 3v14H39z" fill="#151515"/><path d="M45 60h8v7h-8zM56 63h9v9h-9zM44 70h9v6h-9z" fill="#8793a0"/></symbol>
<symbol id="d-ppt" viewBox="0 0 78 78"><rect width="78" height="78" rx="18" fill="#fff"/><circle cx="41" cy="39" r="26" fill="#e06a48"/><path d="M41 13a26 26 0 0 1 26 26H41z" fill="#f39a78"/><path d="M41 65a26 26 0 0 0 26-26H41z" fill="#c8583a"/><rect x="9" y="24" width="29" height="29" rx="3" fill="#c4472a"/><text x="23.500" y="46" font-size="21" font-weight="700" font-family="Inter" fill="#fff" text-anchor="middle">P</text></symbol>
<symbol id="d-html" viewBox="0 0 78 90"><path d="M3 20h72v41H3z" fill="#c8693a"/><path d="M14 0h50v30H14z" fill="#15152c"/><path d="M46 0h18v20H50z" fill="#eee"/><path d="M8 10h39l22 22v58H8z" fill="#f4f4f3"/><path d="m47 10 22 22H50z" fill="#cfcfcf"/><text x="39" y="83" font-size="15" font-family="Inter" fill="#777" text-anchor="middle" textLength="32">HTML</text></symbol>
<symbol id="d-trash" viewBox="0 0 70 92"><path d="M2 12h66L59 84q-1 6-8 6H19q-7 0-8-6z" fill="#dcdddf"/><path d="m10 20 4 60M24 22l3 64M40 22v64M56 22l-4 62" stroke="#cdcfd2" stroke-width="3"/><path d="m6 14 12-8 8 6 7-12 10 10 6-8 8 10 7 4-10 8H14z" fill="#f5f5f5"/><path d="m16 12 8 4-2 6-8-3zM44 12l10-3 2 10-9 3zM30 16l6 2-2 6-6-2z" fill="#6b5348"/><path d="m27 8 8 3-3 7-7-3z" fill="#3fb8d8"/><path d="M2 12q33 26 66 0" fill="none" stroke="#bbb" stroke-width="2"/></symbol>
</defs>
</svg>

<div class="menubar d-flex align-items-center" id="menubar"></div>

<div class="backwin"><i></i></div>

<div class="win">
  <div class="tabs d-flex align-items-center" id="tabs">
    <div class="lights d-flex"><i style="background:#ee6a5f"></i><i style="background:#f5bd4f"></i><i style="background:#61c454"></i></div>
  </div>

  <div class="toolbar d-flex align-items-center">
    <svg width="24" height="24" style="margin-left:32px" viewBox="0 0 24 24" fill="none" stroke="#202124" stroke-width="3"><path d="M24 12H2M12 1 1.500 12 12 23"/></svg>
    <svg width="24" height="24" style="margin-left:48px" viewBox="0 0 24 24" fill="none" stroke="#a3a3a3" stroke-width="3"><path d="M0 12h22M12 1l10.500 11L12 23"/></svg>
    <svg width="24" height="24" style="margin-left:48px" viewBox="0 0 24 24" fill="none" stroke="#202124" stroke-width="3"><path d="M22 14a10.300 10.300 0 1 1-2-8.500L23 9M23 0v9h-9"/></svg>
    <div class="omnibox d-flex align-items-center">
      <div class="sitebtn d-flex align-items-center justify-content-center"><svg width="26" height="26" viewBox="0 0 26 26" fill="none" stroke="#202124" stroke-width="2.800"><circle cx="6" cy="6" r="3.500"/><path d="M13 6h11M1 20h11"/><circle cx="20" cy="20" r="3.500"/></svg></div>
      <span data-w="1018">a6481a0e-1b17-48e5-925f-133729b45681-00-1ypwsu92tle9.worf.replit.dev</span>
      <svg class="ms-auto" width="28" height="28" viewBox="0 0 28 28" fill="none" stroke="#5f6368" stroke-width="2.800"><circle cx="10.500" cy="10.500" r="8.500"/><path d="M17 17l10 10M6 10.500h9"/></svg>
      <svg width="30" height="29" style="margin-left:35px" viewBox="0 0 30 29" fill="none" stroke="#5f6368" stroke-width="2.500"><path d="m15 3 3.700 8.300 8.800.8-6.700 6 2 8.900-7.800-4.700L7.200 27l2-8.900-6.700-6 8.800-.8z"/></svg>
    </div>
    <svg width="34" height="34" style="margin-left:37px;margin-top:-4px" viewBox="0 0 34 34" fill="none" stroke="#202124" stroke-width="3.200"><path d="M3 6h9c0-6 8-6 8 0h8v9c6 0 6 8 0 8v9H3v-9c5 0 5-8 0-8z"/></svg>
    <div class="vsep" style="margin-left:33px"></div>
    <svg width="40" height="40" style="margin-left:33px" viewBox="0 0 40 40"><circle cx="20" cy="20" r="20" fill="#8a8a8a"/><path d="M3 12h10v24Q4 30 1 22z" fill="#c4c4c4"/><path d="M4 18h8M3 24h8M6 30h6" stroke="#444" stroke-width="2"/><path d="M14 11q9-8 15 0v15q-4 10-11 4z" fill="#ececec"/><path d="M13 12Q14 2 24 3q8 2 6 10-8-5-15-2z" fill="#555"/><path d="M18 15h4v3h-4zM24 15h5v3h-5z" fill="#1c1c1c"/><path d="M18 27q5 5 10 0v7l-8 6-4-1z" fill="#3c3c3c"/></svg>
    <div class="update d-flex align-items-center" style="margin-left:24px"><span data-w="269">Finalizar actualización</span><svg width="8" height="28" style="margin-left:24px" viewBox="0 0 8 28"><circle cx="4" cy="3" r="3"/><circle cx="4" cy="14" r="3"/><circle cx="4" cy="25" r="3"/></svg></div>
  </div>

  <div class="bookmarks d-flex align-items-center" id="marks"></div>

  <div class="site">
    <header class="sitebar d-flex align-items-center">
      <div class="logo"><svg width="89" height="89" viewBox="0 0 89 89"><g fill="none" stroke="#1a1712" stroke-width="3"><circle cx="45" cy="45" r="28"/><ellipse cx="45" cy="45" rx="12" ry="28"/><path d="M45 17v56M20 33h50M20 58h50"/><path d="M22 15Q45-3 68 18q17 22 4 45M67 74Q45 90 22 72 5 52 10 30"/></g><path d="m18 10 3 10 8-4M72 80l-2-10-8 4" fill="#1a1712"/><g font-family="Liberation Sans" font-weight="700" fill="#f0b429" stroke="#1a1712" stroke-width="5" paint-order="stroke" text-anchor="middle"><text x="45" y="48" font-size="20" textLength="74" lengthAdjust="spacingAndGlyphs">GLOBAL</text><text x="45" y="64" font-size="19" textLength="38" lengthAdjust="spacingAndGlyphs">BIDS</text></g></svg></div>
      <span class="brandname" data-w="210">Global Bids</span>
      <nav class="d-flex align-items-center ms-auto">
        <a class="navitem d-flex align-items-center text-decoration-none"><svg width="29" height="27" style="margin-right:13px"><use href="#n-home"/></svg><span data-w="62">Inicio</span></a>
        <a class="navitem d-flex align-items-center text-decoration-none"><svg width="33" height="27" style="margin-right:13px"><use href="#n-team"/></svg><span data-w="107">Nosotros</span></a>
        <a class="navitem d-flex align-items-center text-decoration-none"><svg width="27" height="25" style="margin-right:12px"><use href="#n-grid"/></svg><span data-w="147">Marketplace</span></a>
        <a class="navitem d-flex align-items-center text-decoration-none"><svg width="26" height="26" style="margin-right:12px"><use href="#n-gavel"/></svg><span data-w="110">Subastas</span></a>
        <a class="navitem d-flex align-items-center text-decoration-none"><svg width="26" height="26" style="margin-right:12px"><use href="#n-wrench"/></svg><span data-w="109">Servicios</span></a>
        <a class="navitem on d-flex align-items-center text-decoration-none"><svg width="28" height="28" style="margin-right:12px"><use href="#n-head"/></svg><span data-w="95">Soporte</span></a>
        <a class="navitem d-flex align-items-center text-decoration-none"><svg width="27" height="22" style="margin-right:12px"><use href="#n-mail"/></svg><span data-w="108">Contacto</span></a>
        <div style="width:2px;height:64px;background:#23293a;margin:0 11px 0 34px"></div>
        <div class="langs d-flex align-items-center">
          <div class="es d-flex align-items-center"><svg width="32" height="24" viewBox="0 0 32 24"><rect width="32" height="24" rx="5" fill="#a02723"/><path d="M0 6h32v12H0z" fill="#ecc440"/></svg><span data-w="27" style="margin-left:7px">ES</span></div>
          <svg width="32" height="24" style="margin-left:18px" viewBox="0 0 32 24"><rect width="32" height="24" rx="5" fill="#3d5590"/><path d="m2 1 28 22M30 1 2 23" stroke="#fff" stroke-width="5"/><path d="m2 1 28 22M30 1 2 23" stroke="#d84c58" stroke-width="1.500"/><path d="M16 0v24M0 12h32" stroke="#fff" stroke-width="8"/><path d="M16 0v24M0 12h32" stroke="#d84c58" stroke-width="4.500"/></svg><span data-w="29" style="margin-left:7px">EN</span>
        </div>
      </nav>
    </header>

    <main>
      <div class="shell helpgrid">
        <div class="helpcard"><h3><span data-w="268">Servicio al Cliente</span></h3><p><span data-w="438">Soporte personalizado para todas sus</span><span data-w="401">consultas sobre nuestros servicios</span></p><a><span data-w="156">Solicitar ayuda</span><svg width="12" height="17" style="margin-left:14px" viewBox="0 0 12 17" fill="none" stroke="#0f1424" stroke-width="2.800"><path d="m2 1 7.500 7.500L2 16"/></svg></a></div>
        <div class="helpcard"><h3><span data-w="278">Asistencia Técnica</span></h3><p><span data-w="396">Asesoramiento especializado para</span><span data-w="386">maquinaria y equipos industriales</span></p><a><span data-w="156">Solicitar ayuda</span><svg width="12" height="17" style="margin-left:14px" viewBox="0 0 12 17" fill="none" stroke="#0f1424" stroke-width="2.800"><path d="m2 1 7.500 7.500L2 16"/></svg></a></div>
        <div class="helpcard"><h3><span data-w="288">Ayuda con Subasta</span></h3><p><span data-w="342">Guía completa para participar</span><span data-w="413">eficientemente en nuestros eventos</span></p><a><span data-w="156">Solicitar ayuda</span><svg width="12" height="17" style="margin-left:14px" viewBox="0 0 12 17" fill="none" stroke="#0f1424" stroke-width="2.800"><path d="m2 1 7.500 7.500L2 16"/></svg></a></div>
        <div class="helpcard"><h3><span data-w="237">Documentación</span></h3><p><span data-w="468">Acceso a toda la documentación técnica</span><span data-w="239">y legal de los activos</span></p><a><span data-w="156">Solicitar ayuda</span><svg width="12" height="17" style="margin-left:14px" viewBox="0 0 12 17" fill="none" stroke="#0f1424" stroke-width="2.800"><path d="m2 1 7.500 7.500L2 16"/></svg></a></div>
      </div>
      <section class="cta">
        <svg width="30" height="26" viewBox="0 0 30 26"><path d="M3 2h18l6 6v6l-8-3-8 5-8-3z" fill="#3c424c"/><path d="M3 18l8 3 7-5v8H3z" fill="#333a46"/></svg>
        <span data-w="888">Accede a las mejores ofertas y oportunidades en equipos y en maquinaria</span>
      </section>
      <section class="contact">
        <h2><span data-w="386">Contáctanos</span></h2>
        <div class="goldbar"></div>
        <p class="sub"><span data-w="322">Estamos aquí para ayudarte</span></p>
        <div class="shell d-flex justify-content-between text-start">
          <div>
            <div class="place d-flex"><svg width="24" height="32"><use href="#pin"/></svg><div><h4><span data-w="215">Centro Logístico</span></h4><p><span data-w="331">La Negra, Antofagasta, Chile</span></p></div></div>
            <div class="place d-flex"><svg width="24" height="32"><use href="#pin"/></svg><div><h4><span data-w="155">Casa Matriz</span></h4><p><span data-w="507">Luis Carrera 1289 oficina 301, Vitacura, Chile</span></p></div></div>
          </div>
          <div class="msgform"><div class="msgfield"><span data-w="92">Nombre</span></div><div class="msgfield"><span data-w="62">Email</span></div></div>
        </div>
      </section>
    </main>

    <div class="dim"></div>
    <div class="totop d-flex align-items-center justify-content-center"><svg width="20" height="22" viewBox="0 0 20 22" fill="none" stroke="#111728" stroke-width="2.600"><path d="M10 22V2M1 10l9-8.500L19 10"/></svg></div>

    <div class="signup">
      <div class="d-flex align-items-center" style="padding-top:48px"><h1><span data-w="490">Inscríbete en nuestra plataforma</span></h1><svg class="ms-auto" width="16" height="16" style="margin-right:19px" viewBox="0 0 16 16" stroke="#6b7280" stroke-width="2"><path d="m0 0 16 16M16 0 0 16"/></svg></div>
      <p class="intro"><span data-w="607">Regístrate para recibir notificaciones sobre subastas</span></p>
      <div class="d-flex" style="gap:26px;margin-top:26px">
        <div class="flex-fill"><span class="fl" style="margin-bottom:6px"><span data-w="84">Nombre</span></span><div class="fbox" style="width:358px"><span data-w="188">Ingresa tu nombre</span></div></div>
        <div class="flex-fill"><span class="fl" style="margin-bottom:6px"><span data-w="85">Apellido</span></span><div class="fbox" style="width:358px"><span data-w="190">Ingresa tu apellido</span></div></div>
      </div>
      <span class="fl" style="margin:26px 0 6px"><span data-w="56">Email</span></span>
      <div class="fbox"><span data-w="240">tucorreo@ejemplo.com</span></div>
      <span class="fl" style="margin:26px 0 6px"><span data-w="90">Teléfono</span></span>
      <div class="d-flex" style="gap:13px"><div class="fbox pick"><svg width="30" height="20" viewBox="0 0 30 20"><path fill="#f4f4f4" d="M0 0h30v20H0z"/><path fill="#f05b5b" d="M0 10h30v10H0z"/><path fill="#3c4aa0" d="M0 0h10v10H0z"/><path d="m5 2 .9 2.200 2.300.1-1.800 1.500.6 2.200-2-1.300L3 8l.6-2.200-1.800-1.500 2.300-.1z" fill="#fff"/></svg><span data-w="85" style="margin-left:15px">+56 CL</span><svg width="16" height="9" style="margin-left:104px" viewBox="0 0 16 9"><path d="M0 0h16L8 9z" fill="#404040"/></svg></div><div class="fbox flex-fill"><span data-w="126">XXXX XXXX</span></div></div>
      <span class="fl" style="margin:34px 0 0"><span data-w="145">Interesado en</span></span>
      <div class="ticks"><div><i class="tick"></i><span data-w="129">Excavadoras</span></div><div><i class="tick"></i><span data-w="119">Cargadores</span></div><div><i class="tick"></i><span data-w="102">Camiones</span></div><div><i class="tick"></i><span data-w="132">Generadores</span></div><div><i class="tick"></i><span data-w="60">Grúas</span></div><div><i class="tick"></i><span data-w="184">Retroexcavadoras</span></div></div>
      <div class="go d-flex align-items-center justify-content-center"><span data-w="135">Registrarme</span></div>
      <p class="legal"><span data-w="689">Al registrarte, aceptas nuestra Política de Privacidad y Términos de Servicio.</span></p>
    </div>
  </div>
</div>

<div class="dock d-flex align-items-center" id="dock"></div>

<script>
const $ = id => document.getElementById(id);
const use = (id, w = 32, h = 32) => `<svg width="${w}" height="${h}"><use href="#${id}"/></svg>`;
/* each slot runs until the start of the next one */
const slots = (items, origin, html) => items.map((it, i) => {
  const next = items[i + 1], lead = i ? 0 : it[0] - origin;
  return `<div class="slot" style="margin-left:${lead}px;${next ? `width:${next[0] - it[0]}px` : ''}">${html(it)}</div>`;
}).join('');

/* menu bar: start, width, label | start, width, #icon */
const menu = [[108,101,'Chrome'],[251,89,'Archivo'],[383,86,'Edición'],[513,156,'Visualización'],[710,98,'Historial'],[850,109,'Favoritos'],[1000,90,'Perfiles'],[1132,96,'Pestaña'],[1271,96,'Ventana'],[1411,73,'Ayuda'],
 [2274,32,'#s-cal'],[2342,32,'#s-wave'],[2411,32,'#s-disp'],[2474,32,'#s-tri'],[2538,32,'#s-play'],[2606,40,'#s-vol'],[2680,32,'#s-bt'],[2747,32,'#s-kb'],[2815,58,'100%'],[2881,52,'#s-bat'],[2971,36,'#s-wifi'],[3042,32,'#s-find'],[3108,32,'#s-cc'],[3175,210,'Lun may 5  20:07']];
$('menubar').innerHTML = `<div style="margin-left:40px">${use('apple', 28, 34)}</div>` + slots(menu, 68, m =>
  m[2][0] === '#' ? use(m[2].slice(1), m[1]) : `<span data-w="${m[1]}" ${m[2] === '100%' ? 'style="font-size:22px"' : m[0] === 108 ? 'style="font-weight:700"' : ''}>${m[2]}</span>`);

/* tabs */
const tab = (t, w) => `<div class="tabitem" style="width:${w}px">${use(t[0])}<span>${t[1]}</span></div>`;
const left = [['chrm','N'],['snap','4'],['yt','F'],['yt','F'],['globe','S'],['uu','U'],['yt','T'],['vv','V'],['tt','E'],['cloudb','H'],['hug','M'],['sheet','I'],['snap','M'],['maze','M'],['canva','I'],['yt','('],['ell','T'],['ess','F'],['pee','I'],['flagbr','.'],['flagbr','.'],['replit','C']];
const right = [['bolt','k'],['globe','N'],['grok','I'],['cp','c'],['cp','A'],['globe','T'],['chrm','N']];
$('tabs').insertAdjacentHTML('beforeend',
  left.map((t, i) => tab(t, i === 21 ? 74 : 79.5).replace('class="tabitem" style="', `class="tabitem" style="${i === 21 ? 'border:0;' : ''}margin-left:${i ? 20.5 : 0}px;`)).join('') +
  `<div class="tab-on d-flex align-items-center" style="margin-left:9px"><span>C</span><svg style="margin-left:25px" width="16" height="16" viewBox="0 0 16 16" stroke="#202124" stroke-width="3"><path d="m1 1 14 14M15 1 1 15"/></svg></div>` +
  right.map((t, i) => tab(t, 77).replace('style="', `style="margin-left:${i ? 21 : 28}px;`)).join('') +
  `<svg style="margin-left:23px" width="22" height="22" viewBox="0 0 22 22" stroke="#202124" stroke-width="3"><path d="M11 0v22M0 11h22"/></svg>
   <div class="tabmenu ms-auto d-flex align-items-center justify-content-center"><svg width="16" height="10" viewBox="0 0 16 10" fill="none" stroke="#202124" stroke-width="3"><path d="m1 1 7 7 7-7"/></svg></div>`);

/* bookmarks: icon start, icon id, text start, text width, label */
const marks = [[130,'df',175,31,'DF'],[238,'inn',283,12,'L'],[328,'sant',373,34,'OB'],[440,'drive',484,58,'Drive'],[576,'photos',620,78,'Photos'],[732,'feed',777,12,'F'],[822,'wn',866,41,'WN'],[940,'yt',985,30,'YT'],[1048,'mit',1092,42,'MIT'],[1167,'adp',1213,33,'AD'],[1278,'goog',1323,49,'GAD'],[1406,'gpt',1451,46,'GPT'],[1532,'ae',1577,30,'AE'],[1640,'claude',1685,78,'Claude'],[1796,'heygen',1840,89,'HeyGen'],[1962,'bolt',2006,44,'Bolt'],[2084,'gemini',2129,77,'Gemini'],[2242,'replit',2284,64,'Replit'],[2382,'grok',2426,54,'Grok'],[2512,'nblm',2557,143,'NotebookLM'],[2734,'cp',2778,47,'CPP'],[2858,'figma',2902,34,'FM'],[2970,'v7',3015,225,'V7 - Build Trustwo...']];
$('marks').innerHTML = `<div style="margin-left:36px">${use('grid4')}</div><div class="vsep" style="margin-left:29px"></div>` +
  slots(marks, 101, m => `${use(m[1])}<span data-w="${m[3]}" style="margin-left:${m[2] - m[0] - 32}px">${m[4]}</span>`) +
  `<svg style="margin-left:82px" width="20" height="16" viewBox="0 0 20 16" fill="none" stroke="#202124" stroke-width="2.800"><path d="m1 1 7 7-7 7M11 1l7 7-7 7"/></svg>`;

/* dock */
const app = (id, run, extra = '') => `<div class="app ${run ? 'run' : ''}">${use(id, 78, 78)}${extra}</div>`;
const sheetArt = c => `<svg class="shot" viewBox="0 0 90 52">${c}</svg>`;
const rows = (x, w, y, n, col) => Array.from({length: n}, (_, i) => `<path d="M${x} ${y + i * 3.500}h${w}" stroke="${col}" stroke-width="1.500"/>`).join('');
const thumb = (art, mini) => `<div class="app">${art}<div class="mini">${use(mini, 30, 30)}</div></div>`;
$('dock').innerHTML =
  app('d-finder',1)+app('d-launch')+app('d-chrome',1)+app('d-safari')+app('d-mail',1,'<b class="note wide fw-normal">5,710</b>')+app('d-cal')+app('d-notes',1)+app('d-key',1)+app('d-set',0,'<b class="note fw-normal" style="left:66px">1</b>')+app('d-spot',1)+app('d-out')+app('d-xls',1)+app('d-wa',1)+app('d-word',1)+app('d-notion',1)+app('d-ring')+app('d-phone')+app('d-replit')+
  `<div class="dsep" style="margin:0 23px 0 23px"></div>`+app('d-pdf',1)+app('d-prev',1)+app('d-ppt',1)+`<div class="dsep" style="margin:0 21px 0 24px"></div>`+
  `<div class="app" style="padding-top:10px">${use('d-html',78,90)}</div>`+
  thumb(sheetArt('<path d="M0 0h90v6H0z" fill="#ddd"/><path d="M0 6h90v4H0zM0 47h90v5H0z" fill="#aaa"/>'+rows(3,84,15,2,'#9a9')+rows(6,18,24,6,'#bbb')+rows(45,10,24,6,'#aaa')+'<path d="M78 15h8v3h-8z" fill="#39d"/>'),'d-prev')+
  thumb(sheetArt('<path d="M0 0h90v3H0z" fill="#3b6fc9"/><path d="M0 3h90v7H0z" fill="#dcdcdc"/><path d="M22 13h48v39H22z" fill="#fff"/><path d="M30 16h14v3H30z" fill="#e6dc5a"/>'+rows(28,36,20,9,'#888')),'d-word')+
  thumb('','d-pdf')+thumb('','d-spot')+thumb('','d-xls')+
  thumb(sheetArt('<path d="M0 0h15v52H0z" fill="#cfcfcb"/><path d="M15 5h20v47H15z" fill="#eee"/>'+rows(18,13,8,8,'#ccc')+rows(38,48,12,4,'#ddd')+rows(38,30,27,6,'#bbb')),'d-notes')+
  thumb(sheetArt('<path d="M24 4h66v48H24z" fill="#ece5dc"/><path d="M28 6h20v20H28zM28 38h22v10H28z" fill="#2a2d3a"/>'+rows(3,18,5,12,'#999')+'<path d="M26 30h60v5H26z" fill="#fff"/>'),'d-wa')+
  `<div class="app" style="padding-top:8px">${use('d-trash',70,92)}</div>`;

/* track every label to its measured width */
document.querySelectorAll('[data-w]').forEach(el => {
  const w = +el.dataset.w, d = getComputedStyle(el).display;
  el.style.display = 'inline-block';
  el.style.width = 'auto';
  const natural = el.getBoundingClientRect().width;
  el.style.letterSpacing = ((w - natural) / el.textContent.length).toFixed(3) + 'px';
  el.style.display = d;
  el.style.width = w + 'px';
});
</script>
</body>
</html>
